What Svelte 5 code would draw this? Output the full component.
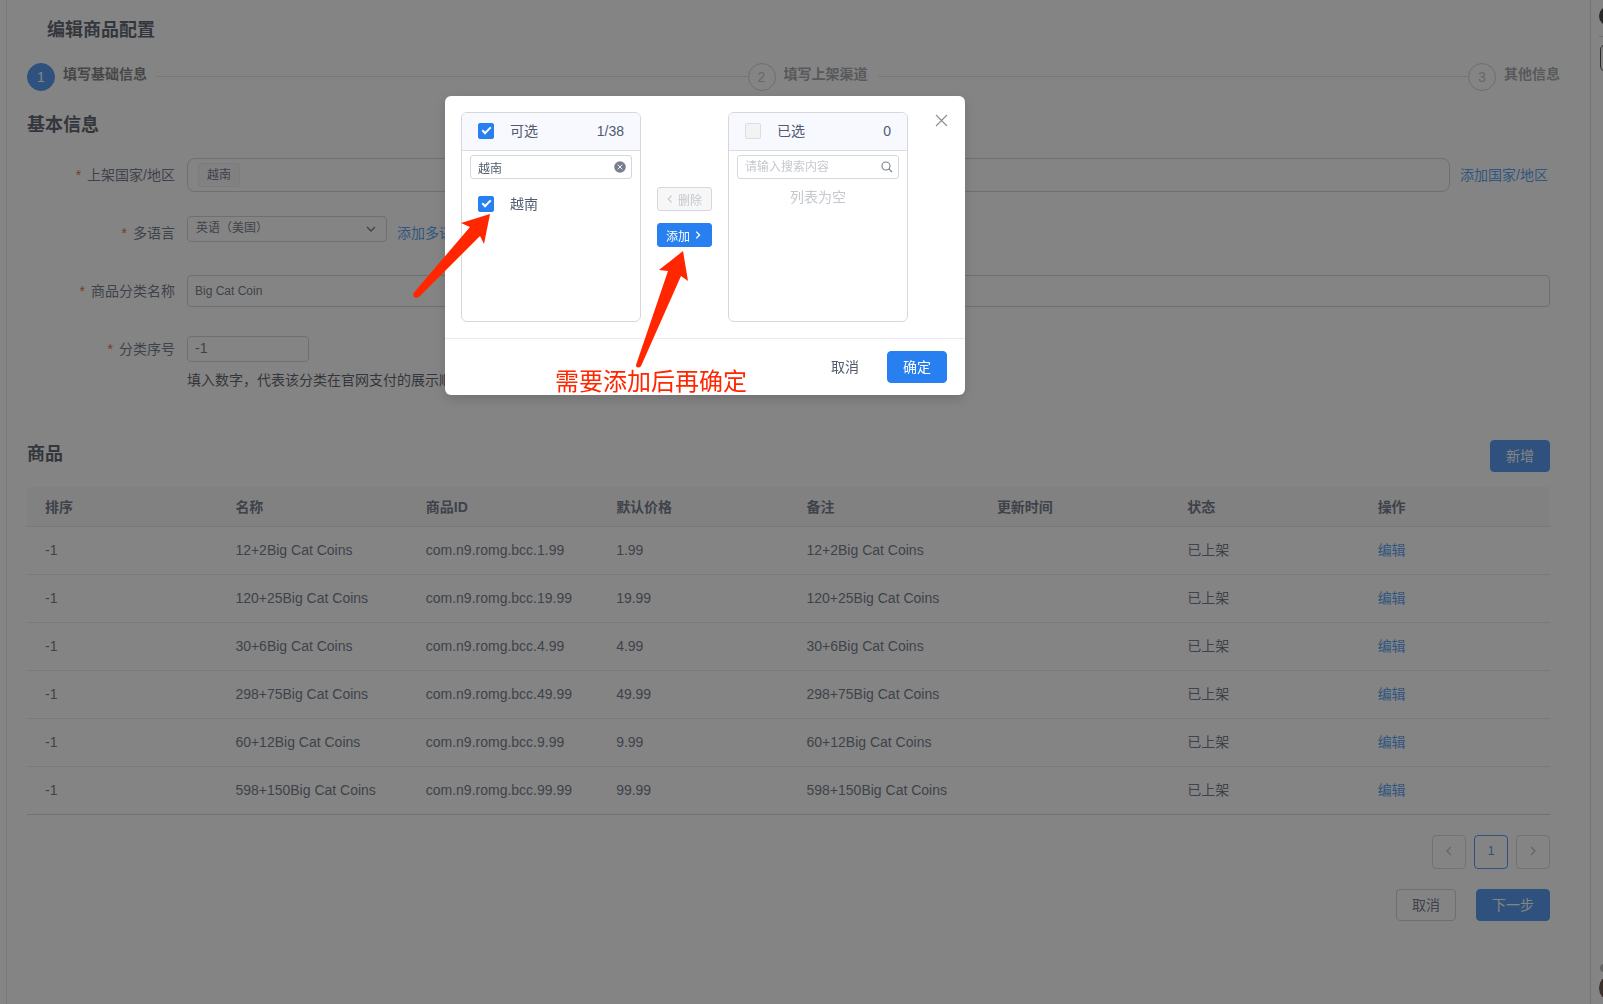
<script>
  const steps = ['填写基础信息', '填写上架渠道', '其他信息'];

  const columns = ['排序', '名称', '商品ID', '默认价格', '备注', '更新时间', '状态', '操作'];

  const products = [
    { sort: -1, name: '12+2Big Cat Coins', id: 'com.n9.romg.bcc.1.99', price: '1.99' },
    { sort: -1, name: '120+25Big Cat Coins', id: 'com.n9.romg.bcc.19.99', price: '19.99' },
    { sort: -1, name: '30+6Big Cat Coins', id: 'com.n9.romg.bcc.4.99', price: '4.99' },
    { sort: -1, name: '298+75Big Cat Coins', id: 'com.n9.romg.bcc.49.99', price: '49.99' },
    { sort: -1, name: '60+12Big Cat Coins', id: 'com.n9.romg.bcc.9.99', price: '9.99' },
    { sort: -1, name: '598+150Big Cat Coins', id: 'com.n9.romg.bcc.99.99', price: '99.99' }
  ];

  let categoryName = $state('Big Cat Coin');
  let categoryOrder = $state('-1');
  let keyword = $state('越南');
  let selectedKeyword = $state('');
  let checked = $state(true);
  let showModal = $state(true);
</script>

<div class="layout">
  <main class="page">
    <h1 class="page-title">编辑商品配置</h1>

    <ol class="steps">
      {#each steps as step, i}
        <li class="step" class:active={i === 0}>
          <span class="step-num">{i + 1}</span>
          <span class="step-title">{step}</span>
        </li>
      {/each}
    </ol>

    <div class="content">
      <h2>基本信息</h2>

      <form>
        <div class="form-item">
          <span class="label">上架国家/地区</span>
          <div class="tag-box"><span class="tag">越南</span></div>
          <a href="#country">添加国家/地区</a>
        </div>

        <div class="form-item">
          <label class="label" for="language">多语言</label>
          <div class="select-wrap">
            <select id="language">
              <option>英语（美国）</option>
            </select>
            <svg width="10" height="6" viewBox="0 0 10 6" fill="none" stroke="currentColor" stroke-width="1.3">
              <path d="M1 1l4 4 4-4" />
            </svg>
          </div>
          <a href="#language">添加多语言</a>
        </div>

        <div class="form-item">
          <label class="label" for="category">商品分类名称</label>
          <input id="category" class="text-input" type="text" bind:value={categoryName} />
        </div>

        <div class="form-item">
          <label class="label" for="order">分类序号</label>
          <input id="order" class="number-input" type="text" bind:value={categoryOrder} />
        </div>
        <p class="help">填入数字，代表该分类在官网支付的展示顺序</p>
      </form>

      <div class="section-head">
        <h2>商品</h2>
        <button class="btn primary">新增</button>
      </div>

      <table>
        <thead>
          <tr>
            {#each columns as column}
              <th>{column}</th>
            {/each}
          </tr>
        </thead>
        <tbody>
          {#each products as product}
            <tr>
              <td>{product.sort}</td>
              <td>{product.name}</td>
              <td>{product.id}</td>
              <td>{product.price}</td>
              <td>{product.name}</td>
              <td></td>
              <td>已上架</td>
              <td><a href="#edit">编辑</a></td>
            </tr>
          {/each}
        </tbody>
      </table>

      <nav class="pager">
        <button aria-label="上一页">
          <svg width="6" height="10" viewBox="0 0 6 10" fill="none" stroke="currentColor" stroke-width="1.4"><path d="M5 1L1 5l4 4" /></svg>
        </button>
        <button class="current">1</button>
        <button aria-label="下一页">
          <svg width="6" height="10" viewBox="0 0 6 10" fill="none" stroke="currentColor" stroke-width="1.4"><path d="M1 1l4 4-4 4" /></svg>
        </button>
      </nav>

      <div class="actions">
        <button class="btn">取消</button>
        <button class="btn primary">下一步</button>
      </div>
    </div>
  </main>

  <!-- Collapsed side panel -->
  <aside class="side">
    <span class="avatar"></span>
    <span class="side-line"></span>
    <span class="side-field"></span>
    <span class="side-dot"></span>
    <span class="avatar brown"></span>
  </aside>
</div>

{#if showModal}
  <div class="mask">
    <div class="modal" role="dialog" aria-modal="true">
      <button class="close" aria-label="关闭" onclick={() => (showModal = false)}>
        <svg width="13" height="13" viewBox="0 0 13 13" stroke="currentColor" stroke-width="1.1"><path d="M1 1l11 11M12 1L1 12" /></svg>
      </button>

      <div class="transfer">
        <section class="list">
          <header>
            <label><input type="checkbox" bind:checked />可选</label>
            <span>1/38</span>
          </header>
          <div class="search">
            <input type="text" aria-label="搜索可选" bind:value={keyword} />
            <button class="clear" aria-label="清空" onclick={() => (keyword = '')}>
              <svg width="12" height="12" viewBox="0 0 12 12">
                <circle cx="6" cy="6" r="5.8" fill="#787e90" />
                <path d="M3.7 3.7l4.6 4.6M8.3 3.7L3.7 8.3" stroke="#fff" stroke-width="0.9" />
              </svg>
            </button>
          </div>
          <label class="option"><input type="checkbox" bind:checked />越南</label>
        </section>

        <div class="operation">
          <button class="btn small" disabled>
            <svg width="6" height="8" viewBox="0 0 6 8" fill="none" stroke="currentColor" stroke-width="1.1"><path d="M4.6 .6L1.200 4l3.400 3.400" /></svg>
            删除
          </button>
          <button class="btn small primary">
            添加
            <svg width="6" height="8" viewBox="0 0 6 8" fill="none" stroke="currentColor" stroke-width="1.3"><path d="M1.200 .6L4.600 4 1.200 7.400" /></svg>
          </button>
        </div>

        <section class="list">
          <header>
            <label><input type="checkbox" disabled />已选</label>
            <span>0</span>
          </header>
          <div class="search">
            <input type="text" placeholder="请输入搜索内容" aria-label="搜索已选" bind:value={selectedKeyword} />
            <svg width="12" height="12" viewBox="0 0 12 12" fill="none" stroke="#787e90" stroke-width="1.1">
              <circle cx="5" cy="5" r="4" />
              <path d="M8 8l3 3" />
            </svg>
          </div>
          <p class="empty">列表为空</p>
        </section>
      </div>

      <footer>
        <button class="btn text">取消</button>
        <button class="btn primary">确定</button>
      </footer>

      <!-- Hand-drawn notes over the dialog -->
      <div class="notes">
        <svg viewBox="0 0 520 299" fill="#ff2600">
          <path d="M45 118L16 127l9 4L-31 196.500Q-33 200 -30 201.500Q-27 202.500 -25 200L35 140l4 8z" />
          <path d="M238 155L214 174l9 1L191 269Q191 271.500 193.500 271.500Q195.500 271.500 196.500 269L236 180l7 5z" />
        </svg>
        <span class="note-text">需要添加后再确定</span>
      </div>
    </div>
  </div>
{/if}

<style>
  :global(body) {
    margin: 0;
    font-family: 'Liberation Sans', 'Noto Sans CJK SC', sans-serif;
    font-size: 14px;
    line-height: 20px;
    color: #515a6e;
    background: #fff;
  }

  .layout {
    display: flex;
    min-height: 100vh;
    padding-left: 6px;
  }

  .page {
    box-sizing: border-box;
    flex: 1;
    padding: 16px 30px 0 20px;
    border-left: 1px solid #e2e4e8;
    border-right: 1px solid #d5d7db;
  }

  h1,
  h2 {
    margin: 0;
    font-size: 18px;
    line-height: 28px;
    font-weight: 600;
    color: #363e4b;
  }

  .page-title {
    padding-left: 20px;
  }

  a {
    color: #2d8cf0;
    text-decoration: none;
  }

  button,
  input,
  select {
    box-sizing: border-box;
    font-family: inherit;
    color: inherit;
    outline: none;
  }

  button {
    cursor: pointer;
  }

  /* Steps */
  .steps {
    display: flex;
    margin: 19px 0 0;
    padding: 0;
    list-style: none;
  }

  .step {
    display: flex;
    flex: 1;
    gap: 8px;
  }

  .step:last-child {
    flex: none;
  }

  .step:not(:last-child)::after {
    content: '';
    flex: 1;
    height: 1px;
    margin: 13px 0 0 2px;
    background: #dcdee2;
  }

  .step-num {
    box-sizing: border-box;
    width: 28px;
    height: 28px;
    border: 1px solid #c5c8ce;
    border-radius: 50%;
    line-height: 26px;
    text-align: center;
    color: #b5b8be;
  }

  .step-title {
    font-weight: 600;
    line-height: 22px;
    color: #90939a;
  }

  .active .step-num {
    background: #2880f0;
    border-color: #2880f0;
    color: #fff;
  }

  .active .step-title {
    color: #666;
  }

  .content {
    padding: 20px 10px 0 0;
  }

  /* Form */
  form {
    padding-top: 19px;
  }

  .form-item {
    display: flex;
    align-items: center;
    gap: 10px;
    min-height: 34px;
    margin-bottom: 24px;
  }

  .label {
    width: 148px;
    margin-right: 2px;
    text-align: right;
  }

  .label::before {
    content: '*';
    margin-right: 6px;
    color: #ed4014;
  }

  .tag-box {
    box-sizing: border-box;
    display: flex;
    align-items: center;
    flex: 1;
    height: 34px;
    padding: 0 10px;
    border: 1px solid #c8cace;
    border-radius: 8px;
  }

  .tag-box + a {
    width: 90px;
  }

  .tag {
    padding: 0 8px;
    border: 1px solid #e8eaec;
    border-radius: 3px;
    background: #f7f7f7;
    font-size: 12px;
    line-height: 22px;
  }

  .select-wrap {
    position: relative;
    align-self: flex-start;
    width: 200px;
    height: 26px;
  }

  .select-wrap svg {
    position: absolute;
    top: 10px;
    right: 11px;
  }

  select,
  .text-input,
  .number-input {
    padding: 0 7px;
    border: 1px solid #c8cace;
    border-radius: 4px;
    background: #fff;
    font-size: 12px;
  }

  select {
    appearance: none;
    width: 100%;
    height: 100%;
    padding: 0 8px 3px;
  }

  .text-input {
    flex: 1;
    height: 32px;
  }

  .number-input {
    width: 122px;
    height: 26px;
    padding-bottom: 2px;
    font-size: 14px;
  }

  .help {
    margin: -24px 0 0 160px;
    line-height: 28px;
    color: #363e4b;
  }

  .section-head {
    display: flex;
    justify-content: space-between;
    margin: 46px 0 15px;
  }

  .btn {
    height: 32px;
    padding: 0 15px 2px;
    border: 1px solid #c8cace;
    border-radius: 4px;
    background: #fff;
    font-size: 14px;
  }

  .btn.primary {
    background: #2880f0;
    border-color: #2880f0;
    color: #fff;
  }

  .btn.text {
    border-color: transparent;
  }

  /* Table */
  table {
    width: 100%;
    border-collapse: separate;
    border-spacing: 0;
    table-layout: fixed;
  }

  th,
  td {
    box-sizing: border-box;
    height: 48px;
    padding: 0 18px 2px;
    border-bottom: 1px solid #e1e3e6;
    text-align: left;
  }

  th {
    height: 40px;
    padding-bottom: 0;
    background: #f8f8f9;
    font-weight: 600;
  }

  tbody tr:last-child td {
    border-bottom-color: #d0d2d6;
  }

  .pager {
    display: flex;
    justify-content: flex-end;
    gap: 8px;
    margin-top: 20px;
  }

  .pager button {
    width: 34px;
    height: 34px;
    padding: 0;
    border: 1px solid #d0d2d6;
    border-radius: 4px;
    background: #fff;
    font-size: 12px;
    color: #b5b8be;
  }

  .pager .current {
    padding-bottom: 2px;
    border-color: #2880f0;
    color: #2880f0;
  }

  .actions {
    display: flex;
    justify-content: flex-end;
    gap: 20px;
    margin-top: 20px;
  }

  /* Side panel */
  .side {
    display: flex;
    flex-direction: column;
    box-sizing: border-box;
    width: 12px;
    padding: 6px 0 4px 8px;
    overflow: hidden;
  }

  .avatar {
    flex: none;
    width: 20px;
    height: 20px;
    border-radius: 50%;
    background: #1c1f18;
  }

  .side-line {
    height: 1px;
    margin: 10px 0 7px;
    background: #c8cace;
  }

  .side-field {
    box-sizing: border-box;
    width: 40px;
    height: 28px;
    margin: 0 0 auto 1px;
    border: 1px solid #222;
    border-radius: 6px;
  }

  .side-dot {
    width: 8px;
    height: 8px;
    margin: 0 0 4px 1px;
    border-radius: 50%;
    background: #aaa;
  }

  .brown {
    height: 24px;
    background: #4a3026;
  }

  /* Modal */
  .mask {
    position: fixed;
    inset: 0;
    display: flex;
    justify-content: center;
    align-items: flex-start;
    padding: 96px 193px 0 0;
    background: rgba(50, 50, 50, 0.6);
  }

  .modal {
    position: relative;
    width: 520px;
    border-radius: 6px;
    background: #fff;
    box-shadow: 0 4px 12px rgba(0, 0, 0, 0.15);
  }

  .close {
    position: absolute;
    top: 18px;
    right: 17px;
    display: flex;
    padding: 0;
    border: none;
    background: none;
    color: #8a8d94;
  }

  .transfer {
    display: flex;
    gap: 16px;
    padding: 16px;
  }

  .list {
    box-sizing: border-box;
    width: 180px;
    height: 210px;
    border: 1px solid #d5d7dd;
    border-radius: 6px;
    overflow: hidden;
  }

  .list header {
    display: flex;
    justify-content: space-between;
    align-items: center;
    height: 35px;
    padding: 0 16px 2px;
    border-bottom: 1px solid #dcdee2;
    background: #f8f9fe;
  }

  .list label {
    display: flex;
    align-items: center;
    gap: 16px;
  }

  .list .option {
    padding: 15px 16px;
  }

  input[type='checkbox'] {
    appearance: none;
    display: grid;
    place-items: center;
    width: 16px;
    height: 16px;
    margin: 0;
    border: 1px solid #dcdee2;
    border-radius: 2px;
  }

  input[type='checkbox']:checked {
    border-color: #2880f0;
    background: #2880f0;
  }

  input[type='checkbox']:checked::after {
    content: '';
    width: 9px;
    height: 5px;
    margin-bottom: 3px;
    border: solid #fff;
    border-width: 0 0 2px 2px;
    box-sizing: border-box;
    transform: rotate(-45deg);
  }

  input[type='checkbox']:disabled {
    background: #f3f3f3;
  }

  .search {
    display: flex;
    align-items: center;
    height: 22px;
    margin: 4px 8px 0;
    padding: 0 5px 0 7px;
    border: 1px solid #d5d7dd;
    border-radius: 3px;
  }

  .search input {
    flex: 1;
    min-width: 0;
    padding: 0;
    border: none;
    background: none;
    font-size: 12px;
  }

  .search input::placeholder {
    color: #c5c8ce;
  }

  .clear {
    display: flex;
    padding: 0;
    border: none;
    background: none;
  }

  .empty {
    margin: 8px 0;
    text-align: center;
    color: #c5c8ce;
  }

  .operation {
    display: flex;
    flex-direction: column;
    gap: 12px;
    width: 55px;
    padding-top: 75px;
  }

  .btn.small {
    display: flex;
    align-items: center;
    justify-content: center;
    gap: 5px;
    height: 24px;
    padding: 0;
    border-radius: 3px;
    font-size: 12px;
  }

  .btn.small.primary {
    padding-right: 2px;
  }

  .btn:disabled {
    border-color: #d5d7dd;
    background: #f7f7f7;
    color: #c5c8ce;
  }

  footer {
    display: flex;
    justify-content: flex-end;
    gap: 12px;
    padding: 12px 18px;
    border-top: 1px solid #e8eaec;
  }

  .notes {
    position: absolute;
    inset: 0;
    pointer-events: none;
  }

  .notes svg {
    width: 520px;
    overflow: visible;
  }

  .note-text {
    position: absolute;
    left: 110px;
    bottom: 0;
    font-size: 24px;
    line-height: 26px;
    color: #ff2600;
  }
</style>
